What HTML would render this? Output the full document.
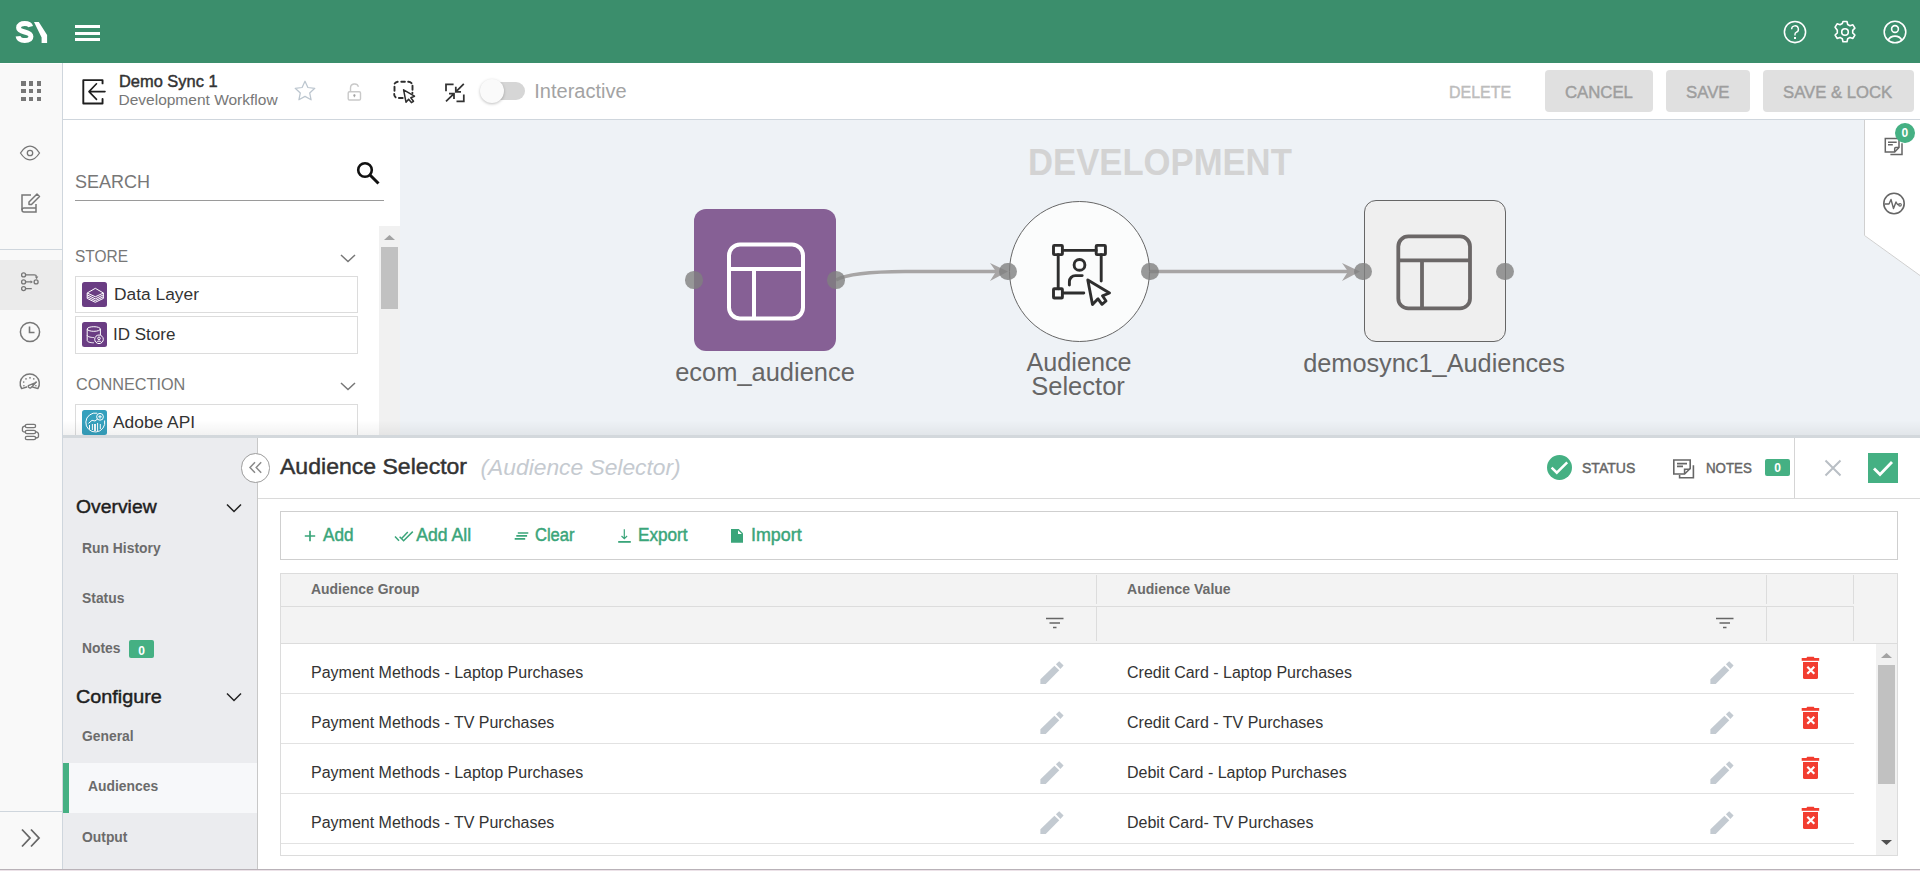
<!DOCTYPE html>
<html><head><meta charset="utf-8"><style>
html,body{margin:0;padding:0;width:1920px;height:871px;overflow:hidden;background:#fff;font-family:"Liberation Sans",sans-serif;position:relative}
.t{position:absolute;line-height:1;white-space:nowrap}
svg{overflow:visible}
</style></head><body>
<div style="position:absolute;left:0px;top:0px;width:1920px;height:63px;background:#3b8e6c"></div>
<svg style="position:absolute;left:0px;top:0px;" width="60" height="62" viewBox="0 0 60 62"><path d="M30.6 26.6C30 24.4 27.8 23.6 24.7 23.6 21.2 23.6 18.6 25 18.6 27.8 18.6 30.6 21.6 31.3 24.7 32 28 32.8 30.9 33.6 30.9 36.5 30.9 39.2 28.2 40.5 24.7 40.5 21 40.5 18.5 39.3 18.1 36.2" fill="none" stroke="#fff" stroke-width="5"/><polygon points="34,22 38.8,22 47.1,35 47.1,43 41.6,43 41.6,37.4" fill="#fff"/></svg>
<div style="position:absolute;left:75.4px;top:25px;width:24.2px;height:3px;background:#fff"></div>
<div style="position:absolute;left:75.4px;top:31.5px;width:24.2px;height:3px;background:#fff"></div>
<div style="position:absolute;left:75.4px;top:38px;width:24.2px;height:3px;background:#fff"></div>
<svg style="position:absolute;left:1782px;top:18.8px;" width="26" height="26" viewBox="0 0 26 26"><circle cx="13" cy="13" r="10.6" fill="none" stroke="#fff" stroke-width="1.55"/><path d="M9.6 10.2a3.4 3.4 0 1 1 4.6 3.2c-.8.4-1.2.9-1.2 1.8v1.3" fill="none" stroke="#fff" stroke-width="1.4"/><rect x="12" y="18" width="2" height="2" fill="#fff"/></svg>
<svg style="position:absolute;left:1832px;top:18.8px;" width="26" height="26" viewBox="0 0 26 26"><path d="M11 2.5h4l.7 3 2.3 1.3 2.9-1 2 3.4-2.2 2.1v2.6l2.2 2.1-2 3.4-2.9-1-2.3 1.3-.7 3h-4l-.7-3-2.3-1.3-2.9 1-2-3.4 2.2-2.1v-2.6L3.1 8.2l2-3.4 2.9 1 2.3-1.3z" fill="none" stroke="#fff" stroke-width="1.6" stroke-linejoin="round"/><circle cx="13" cy="13" r="3.3" fill="none" stroke="#fff" stroke-width="1.6"/></svg>
<svg style="position:absolute;left:1882px;top:18.8px;" width="26" height="26" viewBox="0 0 26 26"><circle cx="13" cy="13" r="10.8" fill="none" stroke="#fff" stroke-width="1.55"/><circle cx="13" cy="10" r="3.4" fill="none" stroke="#fff" stroke-width="1.6"/><path d="M6.2 21.2a7.5 7 0 0 1 13.6 0" fill="none" stroke="#fff" stroke-width="1.6"/></svg>
<div style="position:absolute;left:0px;top:63px;width:1920px;height:56px;background:#fff"></div>
<div style="position:absolute;left:0px;top:119px;width:1920px;height:1px;background:#cfd6dd"></div>
<div style="position:absolute;left:0px;top:64px;width:62px;height:807px;background:#f9f9f9"></div>
<div style="position:absolute;left:62px;top:63px;width:1px;height:808px;background:#cfd6dd"></div>
<div style="position:absolute;left:21.0px;top:81.0px;width:4.6px;height:4.6px;background:#777"></div>
<div style="position:absolute;left:21.0px;top:88.8px;width:4.6px;height:4.6px;background:#777"></div>
<div style="position:absolute;left:21.0px;top:96.6px;width:4.6px;height:4.6px;background:#777"></div>
<div style="position:absolute;left:28.8px;top:81.0px;width:4.6px;height:4.6px;background:#777"></div>
<div style="position:absolute;left:28.8px;top:88.8px;width:4.6px;height:4.6px;background:#777"></div>
<div style="position:absolute;left:28.8px;top:96.6px;width:4.6px;height:4.6px;background:#777"></div>
<div style="position:absolute;left:36.6px;top:81.0px;width:4.6px;height:4.6px;background:#777"></div>
<div style="position:absolute;left:36.6px;top:88.8px;width:4.6px;height:4.6px;background:#777"></div>
<div style="position:absolute;left:36.6px;top:96.6px;width:4.6px;height:4.6px;background:#777"></div>
<svg style="position:absolute;left:76px;top:74px;" width="34" height="34" viewBox="0 0 34 34"><path d="M26.55 9.4V6.15H7.3V29.5h19.25V25" fill="none" stroke="#1e1e1e" stroke-width="1.9" stroke-linejoin="round" stroke-linecap="round"/><path d="M29 17.6H13M20.5 9.8L13 17.6l7.5 7.8" fill="none" stroke="#1e1e1e" stroke-width="1.6" stroke-linecap="round" stroke-linejoin="round"/></svg>
<div class="t" style="left:118.80px;top:72.83px;font-size:16.5px;font-weight:400;color:#333;-webkit-text-stroke:0.45px #333;transform:scaleX(0.995);transform-origin:0 0;">Demo Sync 1</div>
<div class="t" style="left:118.50px;top:92.38px;font-size:15.5px;font-weight:400;color:#777;">Development Workflow</div>
<svg style="position:absolute;left:292px;top:78px;" width="26" height="26" viewBox="0 0 26 26"><path d="M13 3.2l2.9 6.3 6.9.8-5.1 4.7 1.4 6.8L13 18.4l-6.1 3.4 1.4-6.8-5.1-4.7 6.9-.8z" fill="none" stroke="#bcc6cf" stroke-width="1.25" stroke-linejoin="round"/></svg>
<svg style="position:absolute;left:344px;top:80px;" width="22" height="24" viewBox="0 0 22 24"><rect x="4.2" y="11.8" width="12.3" height="8.2" rx="1.3" fill="none" stroke="#c9c9c9" stroke-width="1.4"/><path d="M6.5 11.8V8.2a4.1 4.1 0 0 1 8-1.4" fill="none" stroke="#c9c9c9" stroke-width="1.4"/><circle cx="10.4" cy="15.4" r="1.1" fill="#999"/><path d="M10.4 15.4v1.8" stroke="#aaa" stroke-width="1"/></svg>
<svg style="position:absolute;left:388px;top:76px;" width="34" height="32" viewBox="0 0 34 32"><g fill="none" stroke="#2e2e2e" stroke-width="1.9" stroke-linecap="round"><path d="M6.7 7.6a4 4 0 0 1 3-1.8M13.3 5.8h3.6M20.2 5.8a4 4 0 0 1 3.3 1.4M6.5 10.8v3.9M6.2 18a4 4 0 0 0 1.4 3.3M10.9 22h3.8M24.5 9.8v4M24.4 16.6v.6"/></g><path d="M15.6 13.8L26.5 20.2 22.8 21.8 25.5 25.3 23.4 26.6 20.6 23.2 18 26.2z" fill="#fff" stroke="#2e2e2e" stroke-width="1.5" stroke-linejoin="round"/></svg>
<svg style="position:absolute;left:440px;top:76px;" width="30" height="30" viewBox="0 0 30 30"><path d="M6 15.3V8.3h7.6M23.8 7.8L15.8 15.8M15.8 10.7v5.1H21M6 25.3l8-7.6M9 17.7h5v5.4M23.8 18.6v6.7h-7.3" fill="none" stroke="#333" stroke-width="1.75"/></svg>
<div style="position:absolute;left:484px;top:82px;width:41px;height:18px;background:#d6d6d6;border-radius:9px"></div>
<div style="position:absolute;left:480px;top:79px;width:24px;height:24px;background:#fafafa;border-radius:50%;box-shadow:0 1px 3px rgba(0,0,0,.25)"></div>
<div class="t" style="left:534.30px;top:80.97px;font-size:20px;font-weight:400;color:#a3a3a3;">Interactive</div>
<div class="t" style="left:1449.40px;top:84.07px;font-size:17.4px;font-weight:400;color:#bdbdbd;-webkit-text-stroke:0.45px #bdbdbd;transform:scaleX(0.92);transform-origin:0 0;">DELETE</div>
<div style="position:absolute;left:1545px;top:70px;width:108px;height:42px;background:#e0e0e0;border-radius:4px"></div>
<div class="t" style="left:1564.50px;top:84.07px;font-size:17.4px;font-weight:400;color:#9e9e9e;-webkit-text-stroke:0.45px #9e9e9e;transform:scaleX(0.963);transform-origin:0 0;">CANCEL</div>
<div style="position:absolute;left:1666px;top:70px;width:84px;height:42px;background:#e0e0e0;border-radius:4px"></div>
<div class="t" style="left:1685.50px;top:84.07px;font-size:17.4px;font-weight:400;color:#9e9e9e;-webkit-text-stroke:0.45px #9e9e9e;transform:scaleX(0.965);transform-origin:0 0;">SAVE</div>
<div style="position:absolute;left:1763px;top:70px;width:151px;height:42px;background:#e0e0e0;border-radius:4px"></div>
<div class="t" style="left:1782.50px;top:84.07px;font-size:17.4px;font-weight:400;color:#9e9e9e;-webkit-text-stroke:0.45px #9e9e9e;transform:scaleX(0.96);transform-origin:0 0;">SAVE &amp; LOCK</div>
<svg style="position:absolute;left:18px;top:143px;" width="24" height="20" viewBox="0 0 24 20"><path d="M2.5 10c2.8-4.4 6-6.8 9.5-6.8s6.7 2.4 9.5 6.8c-2.8 4.4-6 6.8-9.5 6.8s-6.7-2.4-9.5-6.8z" fill="none" stroke="#777" stroke-width="1.3"/><circle cx="12" cy="10" r="2.7" fill="none" stroke="#777" stroke-width="1.3"/></svg>
<svg style="position:absolute;left:18px;top:191px;" width="24" height="24" viewBox="0 0 24 24"><path d="M13 4H4v15M4 19a2 2 0 0 0 2 2h12v-8" fill="none" stroke="#777" stroke-width="1.5"/><path d="M4 19a2 2 0 0 1 2-2h12" fill="none" stroke="#777" stroke-width="1.5"/><path d="M19 3l2.5 2.5-8 8H11v-2.5z" fill="none" stroke="#777" stroke-width="1.5" stroke-linejoin="round"/></svg>
<div style="position:absolute;left:0px;top:249px;width:62px;height:1px;background:#cfd6dd"></div>
<div style="position:absolute;left:0px;top:260px;width:62px;height:50px;background:#ebebeb"></div>
<svg style="position:absolute;left:18px;top:270px;" width="24" height="24" viewBox="0 0 24 24"><g fill="none" stroke="#777" stroke-width="1.3"><circle cx="5.6" cy="4.9" r="2"/><circle cx="5.6" cy="11.9" r="2"/><circle cx="5.6" cy="18.6" r="2"/><circle cx="18.1" cy="11.9" r="2"/><path d="M7.6 4.9H16.3Q18.3 4.9 18.6 6.6M7.6 11.9H13M7.6 18.6H13.75"/></g><g fill="#777"><path d="M16.9 6.6H20.3L18.6 9.2z"/><path d="M12.6 10.2V13.6L14.9 11.9z"/></g></svg>
<svg style="position:absolute;left:18px;top:320px;" width="24" height="24" viewBox="0 0 24 24"><circle cx="12" cy="12" r="9.6" fill="none" stroke="#777" stroke-width="1.5"/><path d="M11.5 6.5v6h5" fill="none" stroke="#777" stroke-width="1.6"/></svg>
<svg style="position:absolute;left:18px;top:372px;" width="24" height="20" viewBox="0 0 24 20"><path d="M3.6 16.6A9.6 9.6 0 1 1 19.9 16.6L14.6 15M3.6 16.6L8.7 15" fill="none" stroke="#777" stroke-width="1.4" stroke-linejoin="round" stroke-linecap="round"/><g fill="#777"><circle cx="12" cy="5.8" r=".9"/><circle cx="8" cy="6.9" r=".8"/><circle cx="15.8" cy="6.9" r=".8"/><circle cx="5.7" cy="10.1" r=".8"/><circle cx="18.1" cy="10.1" r=".8"/><circle cx="5.9" cy="13.7" r=".8"/><circle cx="17.9" cy="13.7" r=".8"/></g><path d="M10.3 13.6a1.9 1.9 0 0 0 2.6 2.2L18.2 10.4z" fill="none" stroke="#777" stroke-width="1.3" stroke-linejoin="round"/></svg>
<svg style="position:absolute;left:18px;top:421px;" width="24" height="22" viewBox="0 0 24 22"><g fill="none" stroke="#777" stroke-width="1.3"><rect x="7.3" y="3.3" width="10.3" height="3.3" rx="1.6"/><rect x="7.3" y="9.4" width="10.3" height="3.3" rx="1.6"/><rect x="7.3" y="15.3" width="10.3" height="3.3" rx="1.6"/><path d="M7.3 4.9Q4.4 5.4 4.4 7.5V9.5Q4.4 10.8 7.3 11.2M17.6 10.6Q20.5 11.4 20.5 13V15.5Q20.5 16.8 17.6 17"/></g></svg>
<div style="position:absolute;left:0px;top:811px;width:62px;height:1px;background:#cfd6dd"></div>
<svg style="position:absolute;left:18px;top:826px;" width="26" height="24" viewBox="0 0 26 24"><path d="M4 3.5l8 8.5-8 8.5M13 3.5l8 8.5-8 8.5" fill="none" stroke="#666" stroke-width="1.8"/></svg>
<div style="position:absolute;left:63px;top:120px;width:337px;height:316px;background:#fff"></div>
<div class="t" style="left:75.00px;top:171.92px;font-size:19px;font-weight:400;color:#777;transform:scaleX(0.947);transform-origin:0 0;">SEARCH</div>
<div style="position:absolute;left:75px;top:200px;width:309px;height:1px;background:#9a9a9a"></div>
<svg style="position:absolute;left:354px;top:160px;" width="28" height="28" viewBox="0 0 28 28"><circle cx="11" cy="10" r="6.8" fill="none" stroke="#111" stroke-width="2.6"/><path d="M16 15l8.5 8.5" stroke="#111" stroke-width="3"/></svg>
<div style="position:absolute;left:379px;top:226px;width:21px;height:210px;background:#f1f1f1"></div>
<svg style="position:absolute;left:379px;top:230px;" width="21" height="14" viewBox="0 0 21 14"><polygon points="5,10 16,10 10.5,5" fill="#a3a3a3"/></svg>
<div style="position:absolute;left:381px;top:247px;width:17px;height:62px;background:#c1c1c1"></div>
<div class="t" style="left:75.30px;top:248.17px;font-size:17.4px;font-weight:400;color:#777;transform:scaleX(0.89);transform-origin:0 0;">STORE</div>
<svg style="position:absolute;left:338px;top:250px;" width="20" height="16" viewBox="0 0 20 16"><path d="M3 5l7 6.5L17 5" fill="none" stroke="#777" stroke-width="1.5"/></svg>
<div style="position:absolute;left:75px;top:276px;width:283px;height:37px;border:1px solid #dcdcdc;box-sizing:border-box"></div>
<div style="position:absolute;left:82px;top:282px;width:25px;height:25px;background:#6a3d83;border-radius:2.5px"></div>
<svg style="position:absolute;left:82px;top:282px;" width="25" height="25" viewBox="0 0 25 25"><g fill="none" stroke="#fff" stroke-width="1" stroke-linejoin="round"><path d="M13.3 6.3L21.4 11 13.3 14.75 5.2 11z"/><path d="M5.2 11V12.8L13.3 16.9 21.4 12.8V11M5.2 12.8V14.7L13.3 18.7 21.4 14.7V12.8M5.2 14.7V16.4L13.3 20.3 21.4 16.4V14.7"/></g></svg>
<div class="t" style="left:113.50px;top:286.04px;font-size:17.2px;font-weight:400;color:#333;transform:scaleX(1.01);transform-origin:0 0;">Data Layer</div>
<div style="position:absolute;left:75px;top:316px;width:283px;height:38px;border:1px solid #dcdcdc;box-sizing:border-box"></div>
<div style="position:absolute;left:82px;top:322px;width:25px;height:25px;background:#6a3d83;border-radius:2.5px"></div>
<svg style="position:absolute;left:82px;top:322px;" width="25" height="25" viewBox="0 0 25 25"><g fill="none" stroke="#fff" stroke-width="1"><ellipse cx="11.8" cy="7" rx="6.6" ry="2.3"/><path d="M5.2 7V18.5c0 1.3 3 2.3 6.6 2.3M18.4 7V13M5.2 13.2c0 1.3 3 2.3 6.6 2.3"/><circle cx="17" cy="17.3" r="4.3"/><circle cx="17" cy="16.3" r="1.3"/><path d="M14.6 20.2a2.6 1.8 0 0 1 4.8 0"/></g></svg>
<div class="t" style="left:113.30px;top:326.04px;font-size:17.2px;font-weight:400;color:#333;transform:scaleX(0.99);transform-origin:0 0;">ID Store</div>
<div class="t" style="left:75.60px;top:376.27px;font-size:17.4px;font-weight:400;color:#777;transform:scaleX(0.935);transform-origin:0 0;">CONNECTION</div>
<svg style="position:absolute;left:338px;top:378px;" width="20" height="16" viewBox="0 0 20 16"><path d="M3 5l7 6.5L17 5" fill="none" stroke="#777" stroke-width="1.5"/></svg>
<div style="position:absolute;left:75px;top:404px;width:283px;height:40px;border:1px solid #dcdcdc;box-sizing:border-box"></div>
<div style="position:absolute;left:82px;top:410px;width:25px;height:25px;background:#35a0bd;border-radius:2.5px"></div>
<svg style="position:absolute;left:82px;top:410px;" width="25" height="25" viewBox="0 0 25 25"><g fill="none" stroke="#fff" stroke-width="1"><path d="M15.2 3.2A9.5 9.5 0 1 0 22.6 10.5"/><circle cx="18" cy="6.8" r="3.4"/><path d="M18 5v3.6M16.2 6.8h3.6M6.5 13.4L10 10.3 13 11 15.5 9M7.5 15v4.5M10.4 14v6M15.6 13v8M18.3 14v5"/><path d="M13 14v7" stroke-width="1.8"/></g></svg>
<div class="t" style="left:113.30px;top:413.64px;font-size:17.2px;font-weight:400;color:#333;transform:scaleX(1.01);transform-origin:0 0;">Adobe API</div>
<div style="position:absolute;left:400px;top:120px;width:1520px;height:316px;background:#eef2f6"></div>
<div class="t" style="left:1028.30px;top:143.90px;font-size:37.8px;font-weight:700;color:#d3d3d3;transform:scaleX(0.917);transform-origin:0 0;">DEVELOPMENT</div>
<svg style="position:absolute;left:830px;top:255px;" width="540" height="40" viewBox="0 0 540 40"><path d="M6 25C16 19.5 35 16.8 75 16.6H170" fill="none" stroke="#a7a5a5" stroke-width="3.5"/><path d="M160 8L178 16.6 160 26 166 16.6z" fill="#a7a5a5"/><path d="M320 16.5H520" fill="none" stroke="#a7a5a5" stroke-width="3.5"/><path d="M512 8L530 16.5 512 26 518 16.5z" fill="#a7a5a5"/></svg>
<div style="position:absolute;left:694px;top:209px;width:142px;height:142px;background:#866095;border-radius:12px"></div>
<svg style="position:absolute;left:694px;top:209px;" width="142" height="142" viewBox="0 0 142 142"><rect x="35" y="35.5" width="74" height="74" rx="11" fill="none" stroke="#fff" stroke-width="4"/><path d="M35 60h74M60 60v49.5" stroke="#fff" stroke-width="4"/></svg>
<div style="position:absolute;left:1009px;top:201px;width:141px;height:141px;background:#fbfcfc;border:1.5px solid #666;border-radius:50%;box-sizing:border-box"></div>
<svg style="position:absolute;left:1009px;top:201px;" width="141" height="141" viewBox="0 0 141 141"><g fill="none" stroke="#2e2e2e" stroke-width="2.9" stroke-linecap="round" stroke-linejoin="round"><rect x="44.5" y="44.4" width="8.9" height="9.2" rx=".8"/><rect x="87.2" y="44.4" width="9.2" height="9.2" rx=".8"/><rect x="44.5" y="87.8" width="8.9" height="9.2" rx=".8"/><path d="M53.4 49.4H87.2M49.2 53.6V87.8M92.2 53.6V80M53.4 92H74.8"/><circle cx="70.5" cy="63.9" r="5.4"/><path d="M60.4 84.1V80.6a6 6 0 0 1 6-6H73.2"/></g><path d="M78.8 79L100.5 92 93.5 94.8 97 100 93 103.3 89 97.8 83.5 103.5z" fill="#fbfcfc" stroke="#2e2e2e" stroke-width="2.9" stroke-linejoin="round"/></svg>
<div style="position:absolute;left:1364px;top:200px;width:142px;height:142px;background:#efefef;border:1.5px solid #666;border-radius:12px;box-sizing:border-box"></div>
<svg style="position:absolute;left:1364px;top:200px;" width="142" height="142" viewBox="0 0 142 142"><rect x="34.3" y="36.4" width="71.7" height="72" rx="10" fill="none" stroke="#6b6767" stroke-width="3.8"/><path d="M34.3 60.4h71.7M58 60.4v48" stroke="#6b6767" stroke-width="3.8"/></svg>
<div style="position:absolute;left:685.3px;top:271.3px;width:17.4px;height:17.4px;background:rgba(128,128,128,.8);border-radius:50%"></div>
<div style="position:absolute;left:827.3px;top:271.3px;width:17.4px;height:17.4px;background:rgba(128,128,128,.8);border-radius:50%"></div>
<div style="position:absolute;left:999.3px;top:262.8px;width:17.4px;height:17.4px;background:rgba(128,128,128,.8);border-radius:50%"></div>
<div style="position:absolute;left:1141.3px;top:262.8px;width:17.4px;height:17.4px;background:rgba(128,128,128,.8);border-radius:50%"></div>
<div style="position:absolute;left:1354.3px;top:262.8px;width:17.4px;height:17.4px;background:rgba(128,128,128,.8);border-radius:50%"></div>
<div style="position:absolute;left:1496.3px;top:262.8px;width:17.4px;height:17.4px;background:rgba(128,128,128,.8);border-radius:50%"></div>
<div class="t" style="left:765.30px;top:358.57px;font-size:26.5px;font-weight:400;color:#666;transform:translateX(-50%) scaleX(0.96);">ecom_audience</div>
<div class="t" style="left:1079.00px;top:349.96px;font-size:25.8px;font-weight:400;color:#666;transform:translateX(-50%) scaleX(0.976);">Audience</div>
<div class="t" style="left:1078.20px;top:373.96px;font-size:25.8px;font-weight:400;color:#666;transform:translateX(-50%) scaleX(0.99);">Selector</div>
<div class="t" style="left:1433.70px;top:349.57px;font-size:26.5px;font-weight:400;color:#666;transform:translateX(-50%) scaleX(0.955);">demosync1_Audiences</div>
<svg style="position:absolute;left:1863px;top:120px;" width="57" height="160" viewBox="0 0 57 160"><polygon points="1,0 57,0 57,155.5 1,115.5" fill="#fff"/><path d="M1.5 0V115.5L57 155.5" fill="none" stroke="#d0d0d0" stroke-width="1"/></svg>
<svg style="position:absolute;left:1882px;top:136px;" width="24" height="22" viewBox="0 0 24 22"><g fill="none" stroke="#666" stroke-width="1.5"><path d="M12.7 16.1H3.3V2.6H17V11.5z"/><path d="M12.7 16.1V12.5Q12.7 11.5 13.7 11.5H17"/><path d="M6 6.2H14.7M6 8.7H10.8"/><path d="M20 7.2V18.6H8.4"/></g></svg>
<div style="position:absolute;left:1895px;top:123px;width:19.8px;height:19.8px;background:#45b083;border-radius:50%"></div>
<div class="t" style="left:1904.90px;top:126.84px;font-size:12px;font-weight:700;color:#fff;transform:translateX(-50%);">0</div>
<svg style="position:absolute;left:1881px;top:191px;" width="26" height="26" viewBox="0 0 26 26"><circle cx="13" cy="12.5" r="10.2" fill="none" stroke="#666" stroke-width="1.6"/><path d="M3.5 13h4.5l2-4.5 2.5 9 2.5-6.5 1.5 2.5h2" fill="none" stroke="#666" stroke-width="1.4" stroke-linejoin="round"/><circle cx="19" cy="13.8" r="1.3" fill="none" stroke="#666" stroke-width="1.2"/></svg>
<div style="position:absolute;left:63px;top:420px;width:1857px;height:15px;background:linear-gradient(to bottom,rgba(0,0,0,0),rgba(0,0,0,.05))"></div>
<div style="position:absolute;left:63px;top:435px;width:1857px;height:3px;background:#d3d8dc"></div>
<div style="position:absolute;left:63px;top:438px;width:194px;height:433px;background:#ebecef"></div>
<div style="position:absolute;left:257px;top:438px;width:1px;height:433px;background:#c8c8c8"></div>
<div style="position:absolute;left:258px;top:438px;width:1662px;height:433px;background:#fff"></div>
<div style="position:absolute;left:63px;top:763px;width:194px;height:50px;background:#f7f8fa"></div>
<div style="position:absolute;left:63px;top:763px;width:6px;height:50px;background:#45b083"></div>
<div class="t" style="left:75.60px;top:498.47px;font-size:18.7px;font-weight:400;color:#1e1e1e;-webkit-text-stroke:0.45px #1e1e1e;transform:scaleX(1.035);transform-origin:0 0;">Overview</div>
<svg style="position:absolute;left:224px;top:500px;" width="20" height="16" viewBox="0 0 20 16"><path d="M3 4.5l7 7 7-7" fill="none" stroke="#222" stroke-width="1.5"/></svg>
<div class="t" style="left:81.90px;top:540.20px;font-size:15px;font-weight:700;color:#6b6b6b;transform:scaleX(0.925);transform-origin:0 0;">Run History</div>
<div class="t" style="left:81.90px;top:589.70px;font-size:15px;font-weight:700;color:#6b6b6b;transform:scaleX(0.925);transform-origin:0 0;">Status</div>
<div class="t" style="left:81.90px;top:639.90px;font-size:15px;font-weight:700;color:#6b6b6b;transform:scaleX(0.925);transform-origin:0 0;">Notes</div>
<div style="position:absolute;left:129px;top:640px;width:25px;height:18px;background:#45b083;border-radius:2px"></div>
<div class="t" style="left:141.50px;top:644.84px;font-size:12px;font-weight:700;color:#fff;transform:translateX(-50%);">0</div>
<div class="t" style="left:75.60px;top:687.77px;font-size:18.7px;font-weight:400;color:#1e1e1e;-webkit-text-stroke:0.45px #1e1e1e;transform:scaleX(1.06);transform-origin:0 0;">Configure</div>
<svg style="position:absolute;left:224px;top:689px;" width="20" height="16" viewBox="0 0 20 16"><path d="M3 4.5l7 7 7-7" fill="none" stroke="#222" stroke-width="1.5"/></svg>
<div class="t" style="left:81.90px;top:728.20px;font-size:15px;font-weight:700;color:#6b6b6b;transform:scaleX(0.925);transform-origin:0 0;">General</div>
<div class="t" style="left:87.90px;top:778.20px;font-size:15px;font-weight:700;color:#6b6b6b;transform:scaleX(0.925);transform-origin:0 0;">Audiences</div>
<div class="t" style="left:81.90px;top:828.70px;font-size:15px;font-weight:700;color:#6b6b6b;transform:scaleX(0.925);transform-origin:0 0;">Output</div>
<div style="position:absolute;left:240.8px;top:453.2px;width:29.4px;height:29.4px;background:#fff;border:1.7px solid #9c9c9c;border-radius:50%;box-sizing:border-box"></div>
<svg style="position:absolute;left:241px;top:453px;" width="29" height="29" viewBox="0 0 29 29"><path d="M14 9.2l-5 5.3 5 5.3M20.2 9.2l-5 5.3 5 5.3" fill="none" stroke="#8a8a8a" stroke-width="1.5"/></svg>
<div class="t" style="left:280.30px;top:456.37px;font-size:22.6px;font-weight:400;color:#333;-webkit-text-stroke:0.45px #333;transform:scaleX(1.02);transform-origin:0 0;">Audience Selector</div>
<div class="t" style="left:480.50px;top:455.70px;font-size:22.8px;font-weight:400;color:#c5cad0;font-style:italic;">(Audience Selector)</div>
<div style="position:absolute;left:1546.8px;top:455px;width:25px;height:25.2px;background:#45b083;border-radius:50%"></div>
<svg style="position:absolute;left:1547px;top:455px;" width="25" height="25" viewBox="0 0 25 25"><path d="M4.6 12.6l5.2 5.1 10.4-10.3" fill="none" stroke="#fff" stroke-width="2.5"/></svg>
<div class="t" style="left:1581.80px;top:460.61px;font-size:14.4px;font-weight:400;color:#666;-webkit-text-stroke:0.45px #666;transform:scaleX(0.975);transform-origin:0 0;">STATUS</div>
<svg style="position:absolute;left:1671px;top:456px;" width="26" height="25" viewBox="0 0 26 25"><g fill="none" stroke="#666" stroke-width="1.6"><path d="M19.2 12.5V4H2.8V18H13.6z"/><path d="M13.6 18V13.2H19.2"/><path d="M6 7.6H16M6 10.4H12"/><path d="M22.4 9.2V21.75H8.6V19"/></g></svg>
<div class="t" style="left:1706.40px;top:460.61px;font-size:14.4px;font-weight:400;color:#666;-webkit-text-stroke:0.45px #666;transform:scaleX(0.925);transform-origin:0 0;">NOTES</div>
<div style="position:absolute;left:1765px;top:459px;width:25px;height:17px;background:#45b083;border-radius:2px"></div>
<div class="t" style="left:1777.50px;top:462.34px;font-size:12px;font-weight:700;color:#fff;transform:translateX(-50%);">0</div>
<div style="position:absolute;left:1794px;top:438px;width:1px;height:60px;background:#d5d5d5"></div>
<svg style="position:absolute;left:1822px;top:458px;" width="22" height="20" viewBox="0 0 22 20"><path d="M3.5 2.5l15 15M18.5 2.5l-15 15" stroke="#b9bfc5" stroke-width="2"/></svg>
<div style="position:absolute;left:1868px;top:453px;width:30px;height:30px;background:#45b083"></div>
<svg style="position:absolute;left:1868px;top:453px;" width="30" height="30" viewBox="0 0 30 30"><path d="M6 15.5l6 6 12-12.5" fill="none" stroke="#fff" stroke-width="2.8"/></svg>
<div style="position:absolute;left:258px;top:498px;width:1662px;height:1px;background:#dadada"></div>
<div style="position:absolute;left:280px;top:511px;width:1618px;height:49px;border:1px solid #cfcfcf;box-sizing:border-box"></div>
<svg style="position:absolute;left:302px;top:528px;" width="16" height="16" viewBox="0 0 16 16"><path d="M8 2.8v10.4M2.8 8h10.4" stroke="#3aa57a" stroke-width="1.7"/></svg>
<div class="t" style="left:323.20px;top:526.60px;font-size:17.6px;font-weight:400;color:#3aa57a;-webkit-text-stroke:0.45px #3aa57a;transform:scaleX(0.975);transform-origin:0 0;">Add</div>
<svg style="position:absolute;left:390px;top:526px;" width="24" height="20" viewBox="0 0 24 20"><g fill="none" stroke="#3aa57a" stroke-width="1.5"><path d="M5 10.5l4 4.2M9.6 10.8l4 4 9.2-9.2M13.6 14.8"/><path d="M11.6 12.4l6.2-6.4"/></g></svg>
<div class="t" style="left:416.30px;top:526.60px;font-size:17.6px;font-weight:400;color:#3aa57a;-webkit-text-stroke:0.45px #3aa57a;transform:scaleX(1.0);transform-origin:0 0;">Add All</div>
<svg style="position:absolute;left:508px;top:520px;" width="30" height="30" viewBox="0 0 30 30"><path d="M9.8 13h10.5M8.3 15.9h10.8M6.7 18.9h10.5" stroke="#3aa57a" stroke-width="1.7"/></svg>
<div class="t" style="left:535.00px;top:526.60px;font-size:17.6px;font-weight:400;color:#3aa57a;-webkit-text-stroke:0.45px #3aa57a;transform:scaleX(0.94);transform-origin:0 0;">Clear</div>
<svg style="position:absolute;left:612px;top:520px;" width="24" height="26" viewBox="0 0 24 26"><path d="M12.3 9.2v9.2M9.5 16l2.8 2.6 2.8-2.6" fill="none" stroke="#3aa57a" stroke-width="1.2"/><path d="M6.2 21.9h12.6" stroke="#3aa57a" stroke-width="1.8"/></svg>
<div class="t" style="left:638.00px;top:526.60px;font-size:17.6px;font-weight:400;color:#3aa57a;-webkit-text-stroke:0.45px #3aa57a;transform:scaleX(0.975);transform-origin:0 0;">Export</div>
<svg style="position:absolute;left:720px;top:520px;" width="30" height="30" viewBox="0 0 30 30"><path d="M11 9H18.75L23 13.3V22.8H11Z" fill="#3aa57a"/><path d="M18 10.3V14H21.8Z" fill="#fff"/></svg>
<div class="t" style="left:751.00px;top:526.60px;font-size:17.6px;font-weight:400;color:#3aa57a;-webkit-text-stroke:0.45px #3aa57a;transform:scaleX(1.015);transform-origin:0 0;">Import</div>
<div style="position:absolute;left:280px;top:573px;width:1618px;height:283px;border:1px solid #dcdcdc;box-sizing:border-box"></div>
<div style="position:absolute;left:281px;top:574px;width:1616px;height:69px;background:#f3f3f3"></div>
<div style="position:absolute;left:281px;top:606px;width:1573px;height:1px;background:#dcdcdc"></div>
<div style="position:absolute;left:281px;top:643px;width:1616px;height:1px;background:#dcdcdc"></div>
<div style="position:absolute;left:1096px;top:575px;width:1px;height:29px;background:#dcdcdc"></div>
<div style="position:absolute;left:1096px;top:607px;width:1px;height:34px;background:#dcdcdc"></div>
<div style="position:absolute;left:1766px;top:575px;width:1px;height:29px;background:#dcdcdc"></div>
<div style="position:absolute;left:1766px;top:607px;width:1px;height:34px;background:#dcdcdc"></div>
<div style="position:absolute;left:1853px;top:575px;width:1px;height:29px;background:#dcdcdc"></div>
<div style="position:absolute;left:1853px;top:607px;width:1px;height:34px;background:#dcdcdc"></div>
<div class="t" style="left:311.00px;top:581.10px;font-size:15px;font-weight:700;color:#6b6b6b;transform:scaleX(0.93);transform-origin:0 0;">Audience Group</div>
<div class="t" style="left:1127.20px;top:581.10px;font-size:15px;font-weight:700;color:#6b6b6b;transform:scaleX(0.935);transform-origin:0 0;">Audience Value</div>
<svg style="position:absolute;left:1046px;top:617px;" width="18" height="13" viewBox="0 0 18 13"><path d="M0 1.5h17.5M3.5 6h10.5M7 10.5h3.5" stroke="#666" stroke-width="1.6"/></svg>
<svg style="position:absolute;left:1716px;top:617px;" width="18" height="13" viewBox="0 0 18 13"><path d="M0 1.5h17.5M3.5 6h10.5M7 10.5h3.5" stroke="#666" stroke-width="1.6"/></svg>
<div class="t" style="left:311.00px;top:664.96px;font-size:16px;font-weight:400;color:#333;">Payment Methods - Laptop Purchases</div>
<div class="t" style="left:1127.00px;top:664.96px;font-size:16px;font-weight:400;color:#333;">Credit Card - Laptop Purchases</div>
<div style="position:absolute;left:281px;top:693px;width:1573px;height:1px;background:#e2e2e2"></div>
<svg style="position:absolute;left:1036px;top:656px;" width="32" height="32" viewBox="0 0 32 32"><path d="M4.4 23.2L18.4 9.7 23.3 14.3 9.7 28H4.4z" fill="#c3cad1"/><path d="M19.9 8.3L23.2 5.2 27.6 9.5 24.4 12.9z" fill="#c3cad1"/></svg>
<svg style="position:absolute;left:1706px;top:656px;" width="32" height="32" viewBox="0 0 32 32"><path d="M4.4 23.2L18.4 9.7 23.3 14.3 9.7 28H4.4z" fill="#c3cad1"/><path d="M19.9 8.3L23.2 5.2 27.6 9.5 24.4 12.9z" fill="#c3cad1"/></svg>
<svg style="position:absolute;left:1796px;top:652px;" width="30" height="32" viewBox="0 0 30 32"><rect x="5.7" y="6" width="17.5" height="2.8" fill="#f23d30"/><rect x="10.7" y="4.8" width="7.5" height="1.6" rx=".6" fill="#f23d30"/><path d="M7 9.9h15v15.6a1.6 1.6 0 0 1-1.6 1.6H8.6A1.6 1.6 0 0 1 7 25.5z" fill="#f23d30"/><path d="M11.3 14.7l7 7M18.3 14.7l-7 7" stroke="#fff" stroke-width="2.2"/></svg>
<div class="t" style="left:311.00px;top:714.96px;font-size:16px;font-weight:400;color:#333;">Payment Methods - TV Purchases</div>
<div class="t" style="left:1127.00px;top:714.96px;font-size:16px;font-weight:400;color:#333;">Credit Card - TV Purchases</div>
<div style="position:absolute;left:281px;top:743px;width:1573px;height:1px;background:#e2e2e2"></div>
<svg style="position:absolute;left:1036px;top:706px;" width="32" height="32" viewBox="0 0 32 32"><path d="M4.4 23.2L18.4 9.7 23.3 14.3 9.7 28H4.4z" fill="#c3cad1"/><path d="M19.9 8.3L23.2 5.2 27.6 9.5 24.4 12.9z" fill="#c3cad1"/></svg>
<svg style="position:absolute;left:1706px;top:706px;" width="32" height="32" viewBox="0 0 32 32"><path d="M4.4 23.2L18.4 9.7 23.3 14.3 9.7 28H4.4z" fill="#c3cad1"/><path d="M19.9 8.3L23.2 5.2 27.6 9.5 24.4 12.9z" fill="#c3cad1"/></svg>
<svg style="position:absolute;left:1796px;top:702px;" width="30" height="32" viewBox="0 0 30 32"><rect x="5.7" y="6" width="17.5" height="2.8" fill="#f23d30"/><rect x="10.7" y="4.8" width="7.5" height="1.6" rx=".6" fill="#f23d30"/><path d="M7 9.9h15v15.6a1.6 1.6 0 0 1-1.6 1.6H8.6A1.6 1.6 0 0 1 7 25.5z" fill="#f23d30"/><path d="M11.3 14.7l7 7M18.3 14.7l-7 7" stroke="#fff" stroke-width="2.2"/></svg>
<div class="t" style="left:311.00px;top:764.96px;font-size:16px;font-weight:400;color:#333;">Payment Methods - Laptop Purchases</div>
<div class="t" style="left:1127.00px;top:764.96px;font-size:16px;font-weight:400;color:#333;">Debit Card - Laptop Purchases</div>
<div style="position:absolute;left:281px;top:793px;width:1573px;height:1px;background:#e2e2e2"></div>
<svg style="position:absolute;left:1036px;top:756px;" width="32" height="32" viewBox="0 0 32 32"><path d="M4.4 23.2L18.4 9.7 23.3 14.3 9.7 28H4.4z" fill="#c3cad1"/><path d="M19.9 8.3L23.2 5.2 27.6 9.5 24.4 12.9z" fill="#c3cad1"/></svg>
<svg style="position:absolute;left:1706px;top:756px;" width="32" height="32" viewBox="0 0 32 32"><path d="M4.4 23.2L18.4 9.7 23.3 14.3 9.7 28H4.4z" fill="#c3cad1"/><path d="M19.9 8.3L23.2 5.2 27.6 9.5 24.4 12.9z" fill="#c3cad1"/></svg>
<svg style="position:absolute;left:1796px;top:752px;" width="30" height="32" viewBox="0 0 30 32"><rect x="5.7" y="6" width="17.5" height="2.8" fill="#f23d30"/><rect x="10.7" y="4.8" width="7.5" height="1.6" rx=".6" fill="#f23d30"/><path d="M7 9.9h15v15.6a1.6 1.6 0 0 1-1.6 1.6H8.6A1.6 1.6 0 0 1 7 25.5z" fill="#f23d30"/><path d="M11.3 14.7l7 7M18.3 14.7l-7 7" stroke="#fff" stroke-width="2.2"/></svg>
<div class="t" style="left:311.00px;top:814.96px;font-size:16px;font-weight:400;color:#333;">Payment Methods - TV Purchases</div>
<div class="t" style="left:1127.00px;top:814.96px;font-size:16px;font-weight:400;color:#333;">Debit Card- TV Purchases</div>
<div style="position:absolute;left:281px;top:843px;width:1573px;height:1px;background:#e2e2e2"></div>
<svg style="position:absolute;left:1036px;top:806px;" width="32" height="32" viewBox="0 0 32 32"><path d="M4.4 23.2L18.4 9.7 23.3 14.3 9.7 28H4.4z" fill="#c3cad1"/><path d="M19.9 8.3L23.2 5.2 27.6 9.5 24.4 12.9z" fill="#c3cad1"/></svg>
<svg style="position:absolute;left:1706px;top:806px;" width="32" height="32" viewBox="0 0 32 32"><path d="M4.4 23.2L18.4 9.7 23.3 14.3 9.7 28H4.4z" fill="#c3cad1"/><path d="M19.9 8.3L23.2 5.2 27.6 9.5 24.4 12.9z" fill="#c3cad1"/></svg>
<svg style="position:absolute;left:1796px;top:802px;" width="30" height="32" viewBox="0 0 30 32"><rect x="5.7" y="6" width="17.5" height="2.8" fill="#f23d30"/><rect x="10.7" y="4.8" width="7.5" height="1.6" rx=".6" fill="#f23d30"/><path d="M7 9.9h15v15.6a1.6 1.6 0 0 1-1.6 1.6H8.6A1.6 1.6 0 0 1 7 25.5z" fill="#f23d30"/><path d="M11.3 14.7l7 7M18.3 14.7l-7 7" stroke="#fff" stroke-width="2.2"/></svg>
<div style="position:absolute;left:1876px;top:644px;width:21px;height:211px;background:#f1f1f1"></div>
<svg style="position:absolute;left:1876px;top:648px;" width="21" height="14" viewBox="0 0 21 14"><polygon points="5,10 16,10 10.5,5" fill="#a3a3a3"/></svg>
<div style="position:absolute;left:1878px;top:665px;width:17px;height:119px;background:#c1c1c1"></div>
<svg style="position:absolute;left:1876px;top:836px;" width="21" height="14" viewBox="0 0 21 14"><polygon points="5,4 16,4 10.5,9" fill="#505050"/></svg>
<div style="position:absolute;left:0px;top:869px;width:1920px;height:1px;background:#b9b2b8"></div>
<div style="position:absolute;left:0px;top:870px;width:1920px;height:1px;background:#ece2e8"></div>
</body></html>
